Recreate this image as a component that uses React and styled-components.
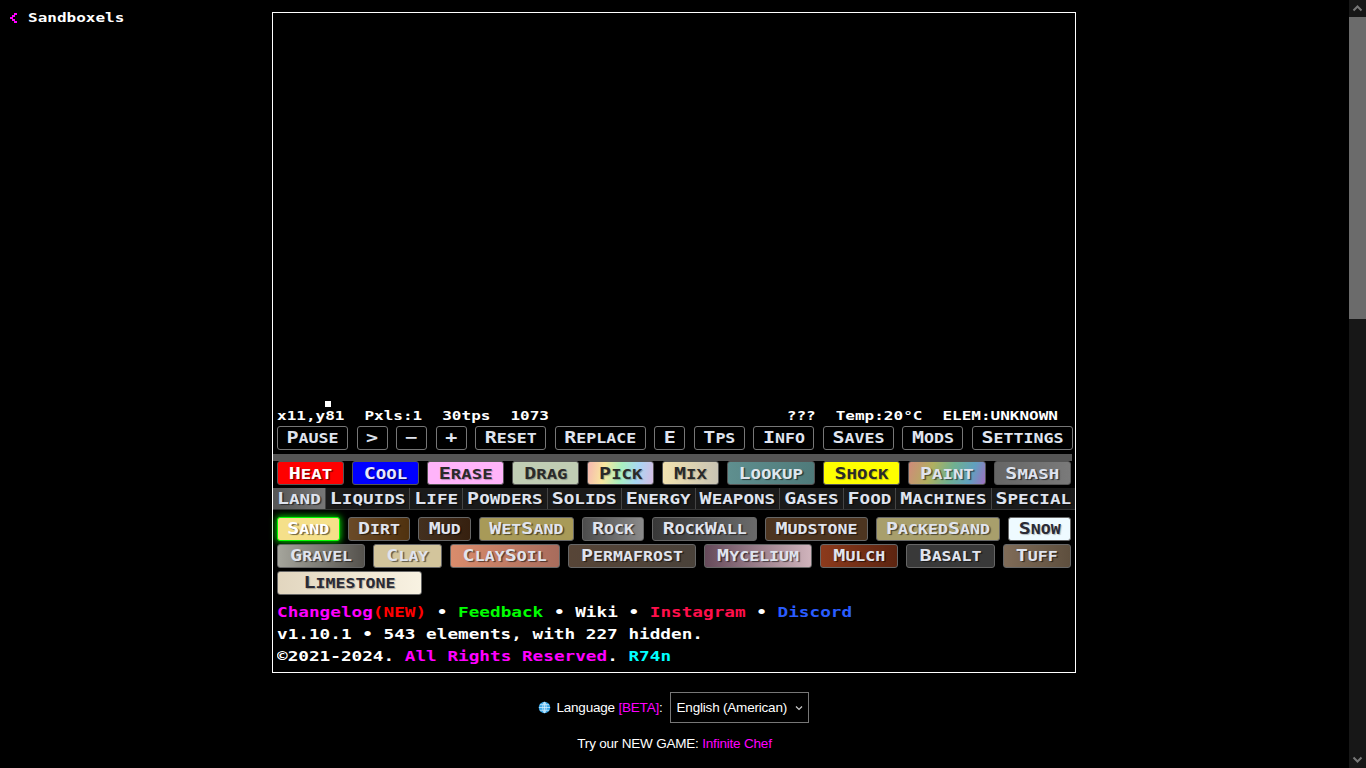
import React from 'react';
import styled, { createGlobalStyle } from 'styled-components';

const GlobalStyle = createGlobalStyle`
  html {
    background: #000;
  }
  body {
    margin: 0;
    background: #000;
    color: #fff;
    font-family: "Liberation Sans", Arial, sans-serif;
    font-size: 13.5px;
    letter-spacing: -0.2px;
  }
`;

const PIXEL_FONT = `"DejaVu Sans Mono", "Liberation Mono", monospace`;
const selectArrow = "data:image/svg+xml,%3Csvg xmlns='http://www.w3.org/2000/svg' width='8' height='6'%3E%3Cpath d='M1 1.5 4 4.5 7 1.5' fill='none' stroke='%23ccc' stroke-width='1.2'/%3E%3C/svg%3E";

const Label = ({ text }) => (
  <LabelText>
    {text.match(/[a-z]+|[^a-z]+/g).map((part, i) =>
      /[a-z]/.test(part) ? <Small key={i}>{part}</Small> : <Big key={i}>{part}</Big>
    )}
  </LabelText>
);

function App() {
  return (
    <>
      <GlobalStyle />
      <Page>
        <TopRow>
          <BackLink>
            <BackChevron viewBox="0 0 8 10">
              <path d="M5 0h3v2H6v2H4v2h2v2h2v2H5V8H3V6H1V4h2V2h2z" fill="#ff00ff" />
            </BackChevron>
            <BackText>Sandboxels</BackText>
          </BackLink>
          <Game>
            <Canvas>
              <CursorPixel />
            </Canvas>
            <Stats>
              <StatGroup>
                <span>x11,y81</span>
                <span>Pxls:1</span>
                <span>30tps</span>
                <span>1073</span>
              </StatGroup>
              <StatGroup>
                <span>???</span>
                <span>Temp:20°C</span>
                <span>ELEM:UNKNOWN</span>
              </StatGroup>
            </Stats>

            <ControlRow>
              {CONTROLS.map((title) => (
                <ControlBtn key={title}>
                  <Label text={title} />
                </ControlBtn>
              ))}
            </ControlRow>

            <Strip />

            <ToolRow>
              {TOOLS.map(({ title, bg, fg }) => (
                <ToolBtn key={title} $bg={bg} $fg={fg}>
                  <Label text={title} />
                </ToolBtn>
              ))}
            </ToolRow>

            <CategoryRow>
              {CATEGORIES.map((title, i) => (
                <CategoryBtn key={title} $active={i === 0}>
                  <Label text={title} />
                </CategoryBtn>
              ))}
            </CategoryRow>

            <Elements>
              {ELEMENTS.map((row, i) => (
                <ElementRow key={i}>
                  {row.map(({ title, bg, fg, selected, wide }) => (
                    <ElementBtn key={title} $bg={bg} $fg={fg} $selected={selected} $wide={wide}>
                      <Label text={title} />
                    </ElementBtn>
                  ))}
                </ElementRow>
              ))}
            </Elements>

            <Credits>
              <CreditLine>
                <Tint $c="#ff00ff">Changelog</Tint>
                <Tint $c="#ff0000">(NEW)</Tint> • <Tint $c="#00ff00">Feedback</Tint> • Wiki •{' '}
                <Tint $c="#ff0f4b">Instagram</Tint> • <Tint $c="#2a5cff">Discord</Tint>
              </CreditLine>
              <CreditLine>v1.10.1 • 543 elements, with 227 hidden.</CreditLine>
              <CreditLine>
                ©2021-2024. <Tint $c="#ff00ff">All Rights Reserved</Tint>. <Tint $c="#00ffff">R74n</Tint>
              </CreditLine>
            </Credits>
          </Game>
        </TopRow>

        <Footer>
          <LanguageRow>
            <GlobeIcon viewBox="0 0 14 14">
              <circle cx="7" cy="7" r="6.2" fill="#3aa7e8" />
              <path
                d="M1 7h12M7 1v12M2 4h10M2 10h10M7 1C4.5 3 4.5 11 7 13M7 1c2.5 2 2.5 10 0 12"
                fill="none"
                stroke="#d6f0ff"
                strokeWidth="0.8"
              />
            </GlobeIcon>
            <span>
              Language <Accent>[BETA]</Accent>:
            </span>
            <LanguageSelect defaultValue="en">
              <option value="en">English (American)</option>
            </LanguageSelect>
          </LanguageRow>
          <FooterLine>
            Try our NEW GAME: <Accent>Infinite Chef</Accent>
          </FooterLine>
          <FooterLine>
            To discuss or report <Accent>BETA</Accent> issues, feel free to join the community.
          </FooterLine>
        </Footer>
      </Page>

      <ScrollBar>
        <ScrollArrow viewBox="0 0 17 17">
          <path d="M4.5 10.5 8.5 6.5 12.5 10.5" fill="none" stroke="#777" strokeWidth="2" />
        </ScrollArrow>
        <ScrollThumb />
        <ScrollGap />
        <ScrollArrow viewBox="0 0 17 17">
          <path d="M4.5 6.5 8.5 10.5 12.5 6.5" fill="none" stroke="#777" strokeWidth="2" />
        </ScrollArrow>
      </ScrollBar>
    </>
  );
}

const Page = styled.div`
  width: 1349px;
  min-height: 1867px;
  padding-top: 12px;
  box-sizing: border-box;
`;

const ScrollBar = styled.div`
  position: fixed;
  top: 0;
  right: 0;
  display: flex;
  flex-direction: column;
  width: 17px;
  height: 100vh;
  background: #171717;
`;

const ScrollArrow = styled.svg`
  display: block;
  flex: none;
  width: 17px;
  height: 17px;
`;

const ScrollThumb = styled.div`
  flex: none;
  height: 302px;
  background: #6b6b6b;
`;

const ScrollGap = styled.div`
  flex: 1;
`;

const TopRow = styled.div`
  display: grid;
  grid-template-columns: 272px 804px 1fr;
  align-items: start;
`;

const BackLink = styled.div`
  display: flex;
  align-items: center;
  gap: 11px;
  padding-left: 9px;
  height: 12px;
`;

const BackChevron = styled.svg`
  flex: none;
  width: 8px;
  height: 10px;
`;

const Stretched = styled.span`
  display: inline-block;
  font-family: ${PIXEL_FONT};
  font-weight: 700;
  letter-spacing: 0;
  white-space: pre;
  transform-origin: center;
`;

const BackText = styled(Stretched)`
  font-size: 16px;
  line-height: 12px;
  transform: scaleY(0.78);
`;

const Game = styled.div`
  grid-column: 2;
  box-sizing: border-box;
  width: 804px;
  height: 661px;
  border: 1px solid #fff;
  font-family: ${PIXEL_FONT};
  font-weight: 700;
  letter-spacing: 0;
`;

const Canvas = styled.div`
  position: relative;
  height: 395px;
`;

const CursorPixel = styled.div`
  position: absolute;
  left: 52px;
  top: 388px;
  width: 6px;
  height: 6px;
  background: #fff;
`;

const Stats = styled.div`
  display: flex;
  justify-content: space-between;
  height: 18px;
  padding: 0 17px 0 4px;
  font-size: 16px;
  line-height: 16px;
  white-space: pre;
  transform: scaleY(0.78);
`;

const StatGroup = styled.div`
  display: flex;
  gap: 20px;
`;

const ControlRow = styled.div`
  display: flex;
  justify-content: space-between;
  width: 796px;
  padding-left: 4px;
`;

const LabelText = styled.span`
  display: inline-block;
  white-space: pre;
  transform: scaleY(0.82);
`;

const Big = styled.span`
  font-size: 20px;
`;

const Small = styled.span`
  text-transform: uppercase;
`;

const BaseBtn = styled.div`
  display: flex;
  align-items: center;
  justify-content: center;
  box-sizing: border-box;
  height: 24px;
  line-height: 22px;
  border-radius: 3px;
  font-size: 16.6px;
  text-shadow: 1.5px 1.5px 1px rgba(0, 0, 0, 0.55);
`;

const ControlBtn = styled(BaseBtn)`
  padding: 0 8.5px;
  border: 1px solid #777;
  background: #000;
  color: #dfe3ee;
`;

const Strip = styled.div`
  height: 7px;
  margin: 4px 3px 0 0;
  background: #555;
`;

const ToolRow = styled.div`
  display: flex;
  gap: 8px;
  padding: 0 4px;
`;

const ToolBtn = styled(BaseBtn)`
  flex: 1 1 auto;
  padding: 0 9px;
  border: 1px solid #555;
  background: ${(p) => p.$bg};
  color: ${(p) => p.$fg};
  font-size: 17.4px;
  text-shadow: ${(p) => (p.$fg === '#2a2a2a' ? '1px 1px 1px rgba(0, 0, 0, 0.25)' : '1.5px 1.5px 1px rgba(0, 0, 0, 0.55)')};
`;

const CategoryRow = styled.div`
  display: flex;
  height: 22px;
  margin-top: 3px;
  background: #1a1a1a;
  border-bottom: 1px solid #333;
  box-sizing: border-box;
`;

const CategoryBtn = styled.div`
  display: flex;
  align-items: center;
  justify-content: center;
  flex: 1 1 auto;
  padding: 0 3px;
  line-height: 21px;
  font-size: 17.6px;
  color: #dfe3ee;
  background: ${(p) => (p.$active ? 'linear-gradient(90deg, #555, #777)' : 'transparent')};
  border-right: 1px solid #444;
  text-shadow: 1.5px 1.5px 1px rgba(0, 0, 0, 0.55);

  &:last-child {
    border-right: none;
  }
`;

const Elements = styled.div`
  display: flex;
  flex-direction: column;
  gap: 3px;
  padding: 7px 4px 0;
`;

const ElementRow = styled.div`
  display: flex;
  gap: 8px;
`;

const ElementBtn = styled(BaseBtn)`
  flex: ${(p) => (p.$wide ? '0 0 145px' : '1 1 auto')};
  padding: 0 9px;
  border: 1px solid ${(p) => (p.$selected ? '#00ff00' : '#666')};
  background: ${(p) => p.$bg};
  color: ${(p) => p.$fg};
  box-shadow: ${(p) => (p.$selected ? '0 0 6px 1px #0c0' : 'none')};
  text-shadow: ${(p) => (p.$fg === '#2a2a35' ? '1px 1px 1px rgba(0, 0, 0, 0.25)' : '1.5px 1.5px 1px rgba(0, 0, 0, 0.55)')};
`;

const Credits = styled.div`
  padding: 6px 0 0 4px;
  font-size: 17.7px;
  line-height: 22px;
  white-space: pre;
`;

const CreditLine = styled.div`
  transform: scaleY(0.8);
`;

const Tint = styled.span`
  color: ${(p) => p.$c};
`;

const Footer = styled.div`
  display: flex;
  flex-direction: column;
  align-items: center;
  padding-top: 19px;
  line-height: 16px;
`;

const LanguageRow = styled.div`
  display: flex;
  align-items: center;
  gap: 5px;
  height: 31px;
  margin-right: 2px;
`;

const GlobeIcon = styled.svg`
  width: 13px;
  height: 13px;
`;

const Accent = styled.span`
  color: #ff00ff;
`;

const LanguageSelect = styled.select`
  box-sizing: border-box;
  width: 139px;
  height: 31px;
  margin-left: 2px;
  padding: 0 6px;
  appearance: none;
  background: #000 url("${selectArrow}") no-repeat right 5px center;
  color: #fff;
  border: 1px solid #777;
  border-radius: 0;
  font-family: "Liberation Sans", Arial, sans-serif;
  font-size: 13.5px;
  letter-spacing: -0.2px;
`;

const FooterLine = styled.div`
  margin-top: 13px;
  white-space: pre;

  & + & {
    margin-top: 13px;
  }
`;

export default App;

const CONTROLS = ['Pause', '>', '−', '+', 'Reset', 'Replace', 'E', 'Tps', 'Info', 'Saves', 'Mods', 'Settings'];

const RAINBOW = 'linear-gradient(100deg, #f5b7b1, #f9e79f 25%, #a9f0c0 50%, #a9d6f5 75%, #d7bde2)';

const TOOLS = [
  { title: 'Heat', bg: '#ff0000', fg: '#ffffff' },
  { title: 'Cool', bg: '#0000ff', fg: '#e8e8ff' },
  { title: 'Erase', bg: '#ffb4fa', fg: '#2a2a2a' },
  { title: 'Drag', bg: '#c0cdb4', fg: '#2a2a2a' },
  { title: 'Pick', bg: RAINBOW, fg: '#2a2a2a' },
  { title: 'Mix', bg: 'linear-gradient(90deg, #f2e2b0, #c9c4b4)', fg: '#2a2a2a' },
  { title: 'Lookup', bg: 'linear-gradient(90deg, #5f8f8f, #4f7a7a)', fg: '#dfe6ee' },
  { title: 'Shock', bg: '#ffff00', fg: '#2a2a2a' },
  { title: 'Paint', bg: 'linear-gradient(110deg, #d08a7a, #b0b060 30%, #70b090 55%, #60a0c0 80%, #a070c0)', fg: '#dfe3ee' },
  { title: 'Smash', bg: 'linear-gradient(90deg, #666, #7a7a7a)', fg: '#dfe3ee' },
];

const CATEGORIES = ['Land', 'Liquids', 'Life', 'Powders', 'Solids', 'Energy', 'Weapons', 'Gases', 'Food', 'Machines', 'Special'];

const LIGHT = '#e0e4ee';
const DARK = '#2a2a35';

const ELEMENTS = [
  [
    { title: 'Sand', bg: '#f5e08a', fg: '#ffffff', selected: true },
    { title: 'Dirt', bg: 'linear-gradient(90deg, #6a4a28, #50320f)', fg: LIGHT },
    { title: 'Mud', bg: 'linear-gradient(90deg, #43301f, #36200f)', fg: LIGHT },
    { title: 'WetSand', bg: '#a89a58', fg: LIGHT },
    { title: 'Rock', bg: 'linear-gradient(90deg, #4c4c4c, #8a8a8a)', fg: LIGHT },
    { title: 'RockWall', bg: 'linear-gradient(90deg, #383838, #6a6a6a)', fg: LIGHT },
    { title: 'Mudstone', bg: '#4d3520', fg: LIGHT },
    { title: 'PackedSand', bg: '#a89f6c', fg: LIGHT },
    { title: 'Snow', bg: '#eefaff', fg: DARK },
  ],
  [
    { title: 'Gravel', bg: 'linear-gradient(90deg, #a5a59c, #55524d)', fg: LIGHT },
    { title: 'Clay', bg: '#d3c59c', fg: LIGHT },
    { title: 'ClaySoil', bg: 'linear-gradient(90deg, #d98c6c, #a86c5c)', fg: LIGHT },
    { title: 'Permafrost', bg: 'linear-gradient(90deg, #574537, #4a423a)', fg: LIGHT },
    { title: 'Mycelium', bg: 'linear-gradient(90deg, #664a5a, #d0b4bc)', fg: LIGHT },
    { title: 'Mulch', bg: 'linear-gradient(90deg, #8c3a1c, #5c2410)', fg: LIGHT },
    { title: 'Basalt', bg: '#393939', fg: LIGHT },
    { title: 'Tuff', bg: 'linear-gradient(90deg, #806c58, #5e4f3e)', fg: LIGHT },
  ],
  [{ title: 'Limestone', bg: 'linear-gradient(90deg, #e2d6bf, #f8f2e2)', fg: DARK, wide: true }],
];
